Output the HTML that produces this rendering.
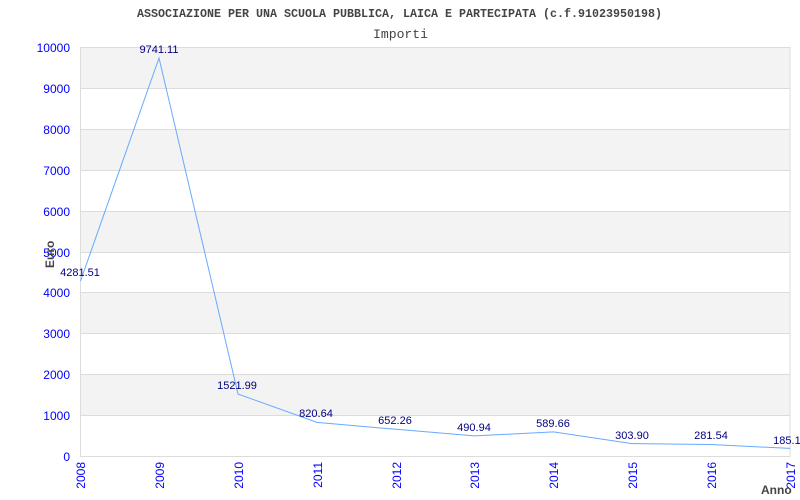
<!DOCTYPE html>
<html><head><meta charset="utf-8"><style>html,body{margin:0;padding:0;background:#fff;width:800px;height:500px;overflow:hidden}</style></head>
<body>
<svg width="800" height="500" xmlns="http://www.w3.org/2000/svg">
<rect width="800" height="500" fill="#fff"/>
<g fill="#f3f3f3">
<rect x="80" y="47" width="710" height="41"/>
<rect x="80" y="129" width="710" height="41"/>
<rect x="80" y="211" width="710" height="41"/>
<rect x="80" y="293" width="710" height="40"/>
<rect x="80" y="374" width="710" height="41"/>
</g>
<g stroke="#dcdcdc" stroke-width="1">
<line x1="80" y1="88.5" x2="790" y2="88.5"/>
<line x1="80" y1="129.5" x2="790" y2="129.5"/>
<line x1="80" y1="170.5" x2="790" y2="170.5"/>
<line x1="80" y1="211.5" x2="790" y2="211.5"/>
<line x1="80" y1="252.5" x2="790" y2="252.5"/>
<line x1="80" y1="292.5" x2="790" y2="292.5"/>
<line x1="80" y1="333.5" x2="790" y2="333.5"/>
<line x1="80" y1="374.5" x2="790" y2="374.5"/>
<line x1="80" y1="415.5" x2="790" y2="415.5"/>
<rect x="80.5" y="47.5" width="709.5" height="409" fill="none"/>
</g>
<polyline fill="none" stroke="#66aaff" stroke-width="1" points="80.5,281 159,58 238,394 317,422.4 396,429.3 474.5,435.9 553.5,431.9 632,443.6 711,444.5 790,448.4"/>
<g font-family="Liberation Mono, monospace" fill="#444">
<text x="137" y="17" font-size="12" font-weight="bold" textLength="525" lengthAdjust="spacingAndGlyphs">ASSOCIAZIONE PER UNA SCUOLA PUBBLICA, LAICA E PARTECIPATA (c.f.91023950198)</text>
<text x="373" y="38" font-size="13" textLength="55" lengthAdjust="spacingAndGlyphs">Importi</text>
</g>
<g font-family="Liberation Sans, sans-serif" font-size="12" fill="#0000ff" text-anchor="end">
<text x="70" y="52">10000</text><text x="70" y="93">9000</text><text x="70" y="134">8000</text>
<text x="70" y="175">7000</text><text x="70" y="216">6000</text><text x="70" y="257">5000</text>
<text x="70" y="297">4000</text><text x="70" y="338">3000</text><text x="70" y="379">2000</text>
<text x="70" y="420">1000</text><text x="70" y="461">0</text>
</g>
<g font-family="Liberation Sans, sans-serif" font-size="12" fill="#0000ff" text-anchor="end">
<text transform="translate(85,462) rotate(-90)">2008</text>
<text transform="translate(164,462) rotate(-90)">2009</text>
<text transform="translate(243,462) rotate(-90)">2010</text>
<text transform="translate(322,462) rotate(-90)">2011</text>
<text transform="translate(401,462) rotate(-90)">2012</text>
<text transform="translate(479,462) rotate(-90)">2013</text>
<text transform="translate(558,462) rotate(-90)">2014</text>
<text transform="translate(637,462) rotate(-90)">2015</text>
<text transform="translate(716,462) rotate(-90)">2016</text>
<text transform="translate(795,462) rotate(-90)">2017</text>
</g>
<g font-family="Liberation Sans, sans-serif" font-size="11" fill="#000080" text-anchor="middle">
<text x="80" y="276">4281.51</text>
<text x="159" y="53">9741.11</text>
<text x="237" y="389">1521.99</text>
<text x="316" y="417">820.64</text>
<text x="395" y="424">652.26</text>
<text x="474" y="431">490.94</text>
<text x="553" y="427">589.66</text>
<text x="632" y="439">303.90</text>
<text x="711" y="439">281.54</text>
<text x="790" y="444">185.13</text>
</g>
<g font-family="Liberation Sans, sans-serif" font-size="12" font-weight="bold" fill="#444">
<text transform="translate(54,268) rotate(-90)">Euro</text>
<text x="761" y="494">Anno</text>
</g>
</svg>
</body></html>
